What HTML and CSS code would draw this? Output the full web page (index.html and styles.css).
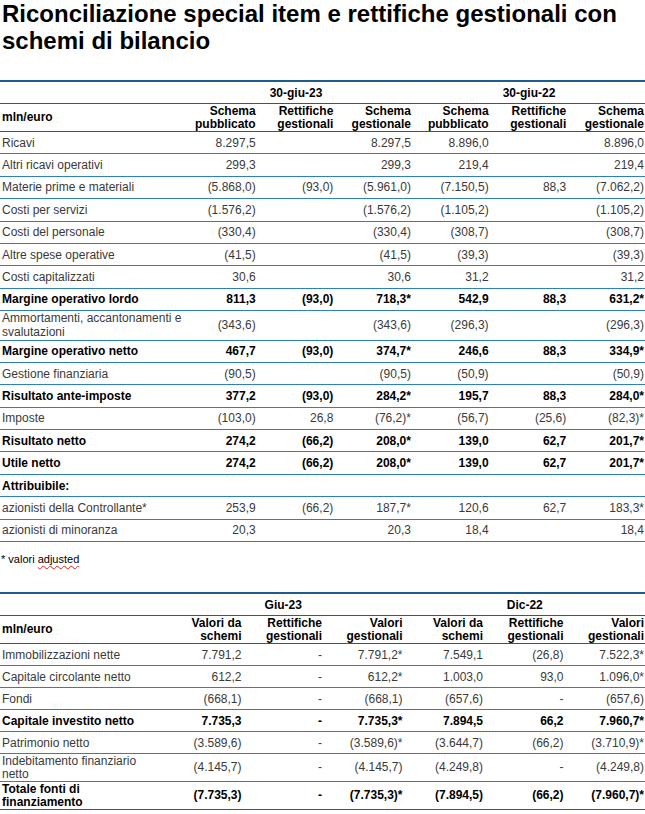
FILE: index.html
```html
<!DOCTYPE html>
<html lang="it">
<head>
<meta charset="utf-8">
<title>Riconciliazione special item</title>
<link rel="stylesheet" href="styles.css">
</head>
<body>
<h1 class="title">Riconciliazione special item e rettifiche gestionali con schemi di bilancio</h1>

<table class="recon recon-pl">
  <colgroup>
    <col class="col-label">
    <col><col><col><col><col><col>
  </colgroup>
  <thead>
    <tr class="period-row">
      <th></th>
      <th colspan="3" class="period">30-giu-23</th>
      <th colspan="3" class="period">30-giu-22</th>
    </tr>
    <tr class="head-row">
      <th class="label">mln/euro</th>
      <th>Schema<br>pubblicato</th>
      <th>Rettifiche<br>gestionali</th>
      <th>Schema<br>gestionale</th>
      <th>Schema<br>pubblicato</th>
      <th>Rettifiche<br>gestionali</th>
      <th>Schema<br>gestionale</th>
    </tr>
  </thead>
  <tbody>
    <tr><td class="label">Ricavi</td><td>8.297,5</td><td></td><td>8.297,5</td><td>8.896,0</td><td></td><td>8.896,0</td></tr>
    <tr><td class="label">Altri ricavi operativi</td><td>299,3</td><td></td><td>299,3</td><td>219,4</td><td></td><td>219,4</td></tr>
    <tr><td class="label">Materie prime e materiali</td><td>(5.868,0)</td><td>(93,0)</td><td>(5.961,0)</td><td>(7.150,5)</td><td>88,3</td><td>(7.062,2)</td></tr>
    <tr><td class="label">Costi per servizi</td><td>(1.576,2)</td><td></td><td>(1.576,2)</td><td>(1.105,2)</td><td></td><td>(1.105,2)</td></tr>
    <tr><td class="label">Costi del personale</td><td>(330,4)</td><td></td><td>(330,4)</td><td>(308,7)</td><td></td><td>(308,7)</td></tr>
    <tr><td class="label">Altre spese operative</td><td>(41,5)</td><td></td><td>(41,5)</td><td>(39,3)</td><td></td><td>(39,3)</td></tr>
    <tr><td class="label">Costi capitalizzati</td><td>30,6</td><td></td><td>30,6</td><td>31,2</td><td></td><td>31,2</td></tr>
    <tr class="total"><td class="label">Margine operativo lordo</td><td>811,3</td><td>(93,0)</td><td>718,3*</td><td>542,9</td><td>88,3</td><td>631,2*</td></tr>
    <tr class="tall"><td class="label nowrap">Ammortamenti, accantonamenti e<br>svalutazioni</td><td>(343,6)</td><td></td><td>(343,6)</td><td>(296,3)</td><td></td><td>(296,3)</td></tr>
    <tr class="total"><td class="label">Margine operativo netto</td><td>467,7</td><td>(93,0)</td><td>374,7*</td><td>246,6</td><td>88,3</td><td>334,9*</td></tr>
    <tr><td class="label">Gestione finanziaria</td><td>(90,5)</td><td></td><td>(90,5)</td><td>(50,9)</td><td></td><td>(50,9)</td></tr>
    <tr class="total"><td class="label">Risultato ante-imposte</td><td>377,2</td><td>(93,0)</td><td>284,2*</td><td>195,7</td><td>88,3</td><td>284,0*</td></tr>
    <tr><td class="label">Imposte</td><td>(103,0)</td><td>26,8</td><td>(76,2)*</td><td>(56,7)</td><td>(25,6)</td><td>(82,3)*</td></tr>
    <tr class="total"><td class="label">Risultato netto</td><td>274,2</td><td>(66,2)</td><td>208,0*</td><td>139,0</td><td>62,7</td><td>201,7*</td></tr>
    <tr class="total"><td class="label">Utile netto</td><td>274,2</td><td>(66,2)</td><td>208,0*</td><td>139,0</td><td>62,7</td><td>201,7*</td></tr>
    <tr class="total"><td class="label">Attribuibile:</td><td></td><td></td><td></td><td></td><td></td><td></td></tr>
    <tr><td class="label">azionisti della Controllante*</td><td>253,9</td><td>(66,2)</td><td>187,7*</td><td>120,6</td><td>62,7</td><td>183,3*</td></tr>
    <tr><td class="label">azionisti di minoranza</td><td>20,3</td><td></td><td>20,3</td><td>18,4</td><td></td><td>18,4</td></tr>
  </tbody>
</table>

<p class="note">* valori <span class="spell">adjusted</span></p>

<table class="recon recon-bs">
  <colgroup>
    <col class="col-label">
    <col><col><col><col><col><col>
  </colgroup>
  <thead>
    <tr class="period-row">
      <th></th>
      <th colspan="3" class="period">Giu-23</th>
      <th colspan="3" class="period">Dic-22</th>
    </tr>
    <tr class="head-row">
      <th class="label">mln/euro</th>
      <th>Valori da<br>schemi</th>
      <th>Rettifiche<br>gestionali</th>
      <th>Valori<br>gestionali</th>
      <th>Valori da<br>schemi</th>
      <th>Rettifiche<br>gestionali</th>
      <th>Valori<br>gestionali</th>
    </tr>
  </thead>
  <tbody>
    <tr><td class="label">Immobilizzazioni nette</td><td>7.791,2</td><td>-</td><td>7.791,2*</td><td>7.549,1</td><td>(26,8)</td><td>7.522,3*</td></tr>
    <tr><td class="label">Capitale circolante netto</td><td>612,2</td><td>-</td><td>612,2*</td><td>1.003,0</td><td>93,0</td><td>1.096,0*</td></tr>
    <tr><td class="label">Fondi</td><td>(668,1)</td><td>-</td><td>(668,1)</td><td>(657,6)</td><td>-</td><td>(657,6)</td></tr>
    <tr class="total"><td class="label">Capitale investito netto</td><td>7.735,3</td><td>-</td><td>7.735,3*</td><td>7.894,5</td><td>66,2</td><td>7.960,7*</td></tr>
    <tr><td class="label">Patrimonio netto</td><td>(3.589,6)</td><td>-</td><td>(3.589,6)*</td><td>(3.644,7)</td><td>(66,2)</td><td>(3.710,9)*</td></tr>
    <tr class="tall"><td class="label">Indebitamento finanziario netto</td><td>(4.145,7)</td><td>-</td><td>(4.145,7)</td><td>(4.249,8)</td><td>-</td><td>(4.249,8)</td></tr>
    <tr class="total tall last"><td class="label">Totale fonti di finanziamento</td><td>(7.735,3)</td><td>-</td><td>(7.735,3)*</td><td>(7.894,5)</td><td>(66,2)</td><td>(7.960,7)*</td></tr>
  </tbody>
</table>
</body>
</html>
```

FILE: styles.css
```css
html, body {
  margin: 0;
  padding: 0;
  background: #ffffff;
}

body {
  font-family: "Liberation Sans", Arial, sans-serif;
  font-size: 12px;
  color: #3a3a3a;
}

.title {
  margin: 0 0 26px 0;
  padding: 0 0 0 2px;
  font-size: 24px;
  line-height: 27px;
  font-weight: bold;
  color: #000000;
}

.recon {
  width: 645px;
  table-layout: fixed;
  border-collapse: separate;
  border-spacing: 0;
  border-top: 2px solid #1f5d8c;
}

.recon-pl .col-label { width: 179px; }
.recon-bs .col-label { width: 162px; }

.recon th,
.recon td {
  padding: 0 1px 0 2px;
  text-align: right;
  vertical-align: middle;
  line-height: 14px;
  white-space: normal;
}

.recon th {
  font-weight: bold;
  color: #000000;
  border-bottom: 1px solid #1f5d8c;
}

.recon td {
  border-bottom: 1px solid #2e7fbe;
}

.recon .label {
  text-align: left;
}

.recon .nowrap {
  white-space: nowrap;
}

.period-row { height: 22px; }
.head-row { height: 28px; }
.head-row th { line-height: 13px; }

.recon .period {
  text-align: center;
}

.recon-pl tbody tr { height: 22.4px; }
.recon-pl tbody tr.tall { height: 29.4px; }

.recon-bs tbody tr { height: 22px; }
.recon-bs tbody tr.tall { height: 28px; }
.recon-bs tbody tr.tall td { line-height: 13px; }

.recon tr.total td {
  font-weight: bold;
  color: #000000;
}

.recon-bs tr.last td {
  border-bottom-color: #1f5d8c;
}

.note {
  margin: 11px 0 26px 0;
  padding-left: 1px;
  font-size: 11px;
  line-height: 13px;
  color: #000000;
}

.spell {
  text-decoration: underline wavy #e02020;
  text-decoration-thickness: 1px;
  text-underline-offset: 2px;
}
```
